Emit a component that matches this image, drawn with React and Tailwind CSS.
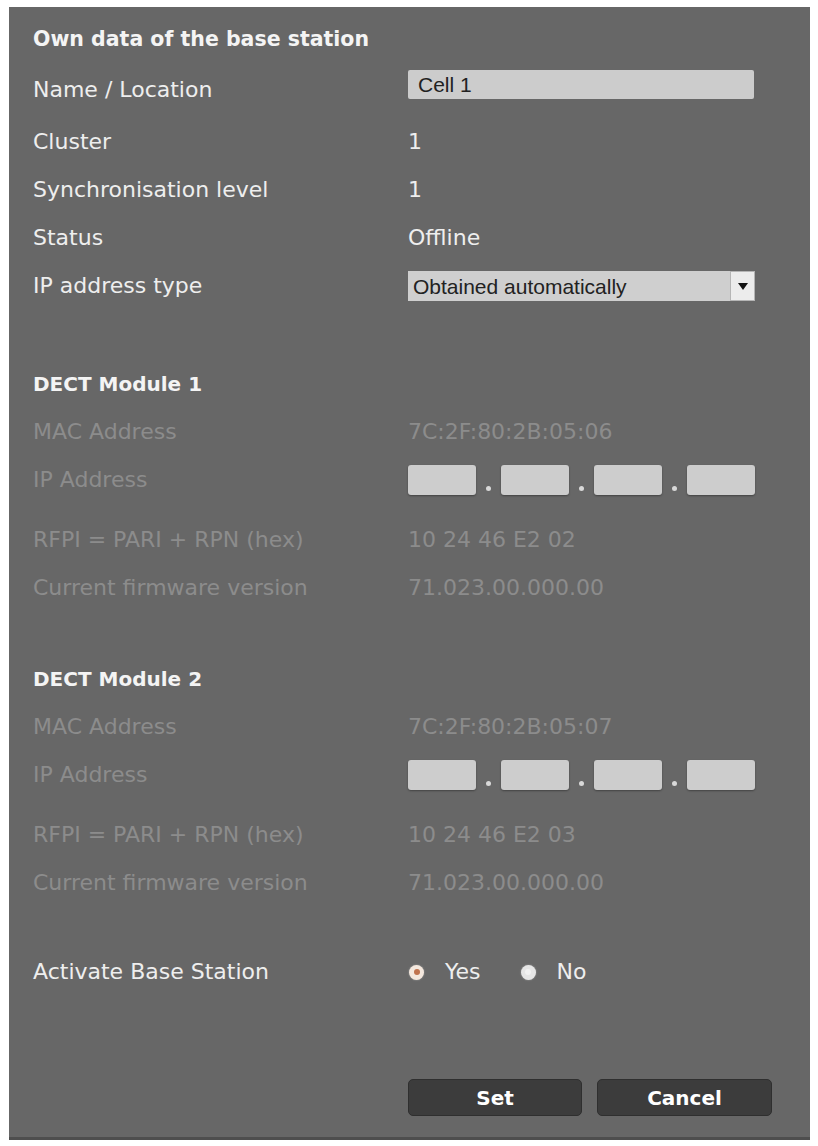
import { useState } from "react";

const font = { fontFamily: '"DejaVu Sans", Verdana, sans-serif' };
const arial = { fontFamily: '"Liberation Sans", Arial, sans-serif' };

const Row = ({ label, children, faded, h = "h-[48px]" }) => (
  <div className={`flex items-center ${h}`}>
    <div
      className={`w-[375px] shrink-0 text-[22px] leading-none ${
        faded ? "text-[#8c8c8c]" : "text-[#eeeeee]"
      }`}
    >
      {label}
    </div>
    <div
      className={`text-[22px] leading-none ${
        faded ? "text-[#8c8c8c]" : "text-[#eeeeee]"
      }`}
    >
      {children}
    </div>
  </div>
);

const IpFields = () => (
  <div className="flex items-end">
    {[0, 1, 2, 3].map((i) => (
      <div key={i} className="flex items-end">
        {i > 0 && (
          <span className="mx-[10px] mb-[4px] h-[5px] w-[5px] rounded-full bg-[#d8d8d8]" />
        )}
        <div className="h-[30px] w-[68px] rounded-[3px] bg-[#cdcdcd] shadow-[0_1px_2px_rgba(0,0,0,0.35)]" />
      </div>
    ))}
  </div>
);

const Radio = ({ checked, onClick, label }) => (
  <button onClick={onClick} className="flex items-center gap-[21px]">
    <span
      className={`flex h-[15px] w-[15px] items-center justify-center rounded-full ${
        checked ? "bg-[#f4e8de]" : "bg-[#e6e6e6]"
      } shadow-[0_0_2px_rgba(255,255,255,0.4)]`}
    >
      <span
        className={`h-[6px] w-[6px] rounded-full ${
          checked ? "bg-[#c0744f]" : "bg-[#f2f2f2]"
        }`}
      />
    </span>
    <span className="text-[22px] leading-none text-[#eeeeee]">{label}</span>
  </button>
);

const Module = ({ n, mac, rfpi }) => (
  <>
    <div className="flex h-[48px] items-center text-[20px] font-bold leading-none text-[#f4f4f4]">
      DECT Module {n}
    </div>
    <Row label="MAC Address" faded>
      {mac}
    </Row>
    <Row label="IP Address" faded>
      <IpFields />
    </Row>
    <div className="h-[12px]" />
    <Row label="RFPI = PARI + RPN (hex)" faded>
      {rfpi}
    </Row>
    <Row label="Current firmware version" faded>
      71.023.00.000.00
    </Row>
  </>
);

export default function App() {
  const [active, setActive] = useState(true);

  return (
    <div className="min-h-screen bg-white" style={font}>
      <div className="ml-[9px] mt-[7px] flex h-[1133px] w-[801px] flex-col border-b-[3px] border-[#4e4e4e] bg-[#676767] pl-[24px] pt-[10px]">
        <div className="flex h-[44px] items-center text-[20.5px] font-bold leading-none text-[#f4f4f4]">
          Own data of the base station
        </div>
        <Row label="Name / Location" h="h-[57px]">
          <div
            className="mb-[11px] flex h-[29px] w-[346px] items-center rounded-[2px] bg-[#cccccc] pl-[10px] text-[21px] text-[#222]"
            style={arial}
          >
            Cell 1
          </div>
        </Row>
        <Row label="Cluster">1</Row>
        <Row label="Synchronisation level">1</Row>
        <Row label="Status">Offline</Row>
        <Row label="IP address type">
          <div className="flex h-[30px] w-[347px] bg-[#cfcfcf]" style={arial}>
            <div className="flex flex-1 items-center pl-[5px] text-[21px] text-[#222]">
              Obtained automatically
            </div>
            <div className="flex w-[25px] items-center justify-center border border-[#b5b5b5] bg-[#ececec]">
              <svg width="10" height="7" viewBox="0 0 10 7">
                <path d="M0 0h10L5 7z" fill="#111" />
              </svg>
            </div>
          </div>
        </Row>

        <div className="h-[50px]" />
        <Module n={1} mac="7C:2F:80:2B:05:06" rfpi="10 24 46 E2 02" />

        <div className="h-[43px]" />
        <Module n={2} mac="7C:2F:80:2B:05:07" rfpi="10 24 46 E2 03" />

        <div className="h-[41px]" />
        <Row label="Activate Base Station">
          <div className="flex items-center gap-[40px] pl-[1px]">
            <Radio checked={active} onClick={() => setActive(true)} label="Yes" />
            <Radio checked={!active} onClick={() => setActive(false)} label="No" />
          </div>
        </Row>

        <div className="ml-[375px] mt-[83px] flex gap-[15px]">
          <button className="h-[37px] w-[174px] rounded-[5px] border border-[#2f2f2f] bg-[#3c3c3c] text-[20px] font-bold text-white">
            Set
          </button>
          <button className="h-[37px] w-[175px] rounded-[5px] border border-[#2f2f2f] bg-[#3c3c3c] text-[20px] font-bold text-white">
            Cancel
          </button>
        </div>
      </div>
    </div>
  );
}
